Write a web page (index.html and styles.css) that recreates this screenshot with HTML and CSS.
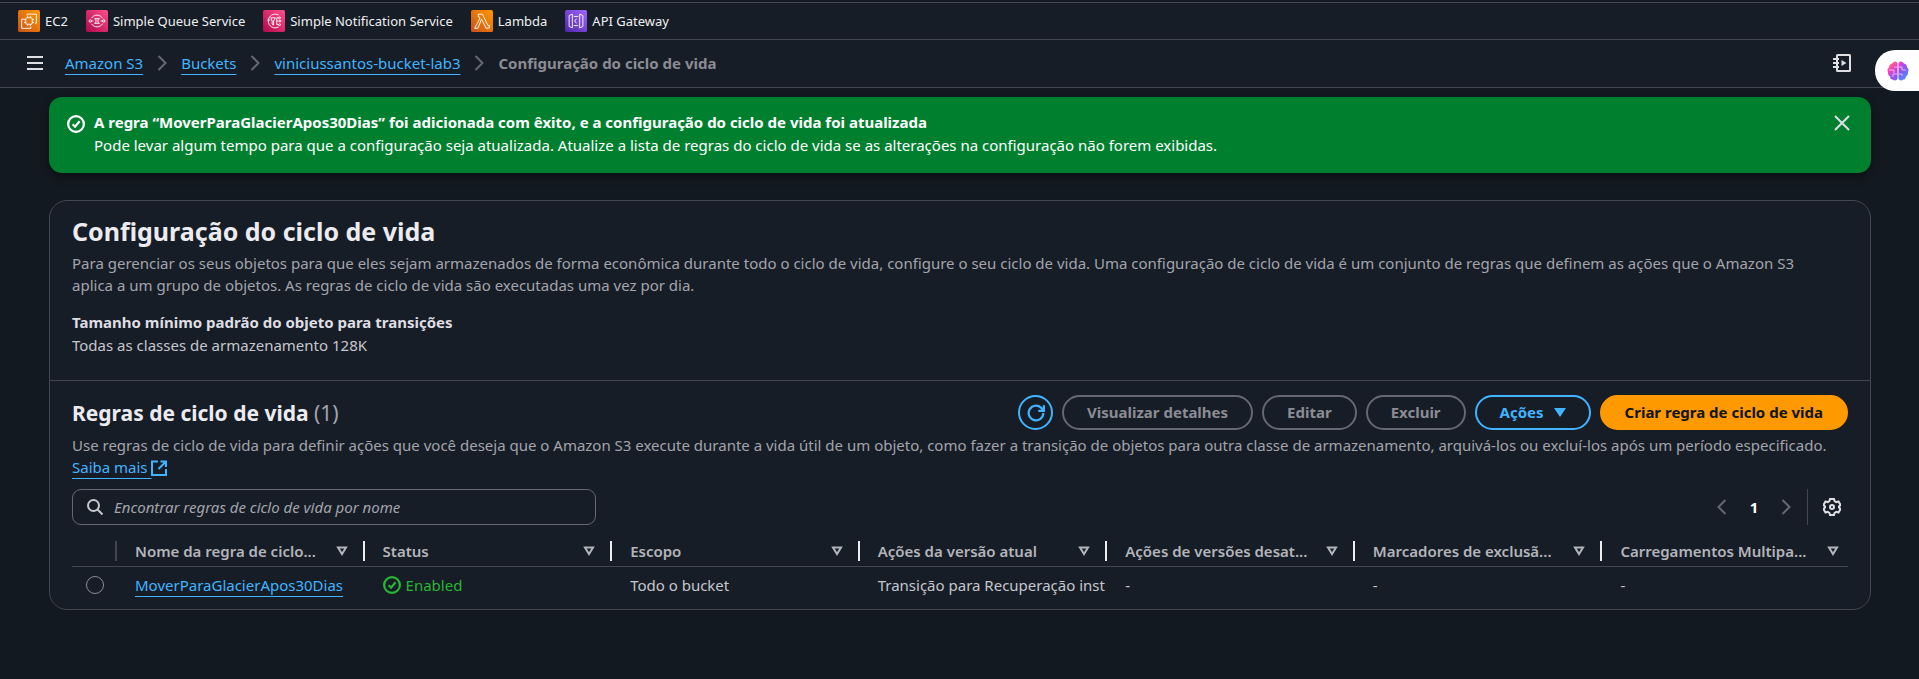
FILE: index.html
```html
<!DOCTYPE html>
<html lang="pt-BR">
<head>
<meta charset="utf-8">
<title>Configuração do ciclo de vida | S3</title>
<link rel="stylesheet" href="styles.css">
</head>
<body>
<svg class="defs" aria-hidden="true">
  <defs>
    <linearGradient id="g-orange" x1="0" y1="1" x2="1" y2="0"><stop offset="0" stop-color="#c8511b"/><stop offset="1" stop-color="#f90"/></linearGradient>
    <linearGradient id="g-pink" x1="0" y1="1" x2="1" y2="0"><stop offset="0" stop-color="#b0084d"/><stop offset="1" stop-color="#ff4f8b"/></linearGradient>
    <linearGradient id="g-purple" x1="0" y1="1" x2="1" y2="0"><stop offset="0" stop-color="#4d27a8"/><stop offset="1" stop-color="#a166ff"/></linearGradient>
    <linearGradient id="g-brain" x1="0" y1="0" x2="1" y2="1"><stop offset="0" stop-color="#ff9a3d"/><stop offset=".3" stop-color="#f23fc0"/><stop offset=".6" stop-color="#8a55f5"/><stop offset="1" stop-color="#35a8ff"/></linearGradient>
    <symbol id="ok" viewBox="0 0 16 16"><circle cx="8" cy="8" r="7"/><path d="m5 8.2 2.2 2.2 4-4.8"/></symbol>
    <symbol id="right" viewBox="0 0 16 16"><path d="m4.500 1 7 7-7 7"/></symbol>
    <symbol id="sort" viewBox="0 0 16 16"><path d="M4 4.500h8l-4 6.500z"/></symbol>
  </defs>
</svg>

<nav class="favorites" aria-label="Favoritos">
  <a class="fav" href="#ec2"><svg class="fav-icon" viewBox="0 0 24 24"><rect width="24" height="24" rx="2" fill="url(#g-orange)"/><g class="line"><path d="M10 6V4.500H20V14.500H18.500M7 10H4V20H14V18"/><rect x="8.500" y="8.500" width="7" height="7" rx="1"/><path d="M10.500 8.500v-2M13.500 8.500v-2M10.500 17.500v-2M13.500 17.500v-2M8.500 10.500h-2M8.500 13.500h-2M17.500 10.500h-2M17.500 13.500h-2"/></g></svg>EC2</a>
  <a class="fav" href="#sqs"><svg class="fav-icon" viewBox="0 0 24 24"><rect width="24" height="24" rx="2" fill="url(#g-pink)"/><g class="line"><path d="M6 9A7 7 0 0 1 18 9M6 15A7 7 0 0 0 18 15M9 9.500h6M9 14.500h6M10.500 9.500Q11.500 12 10.500 14.500M13.500 9.500Q12.500 12 13.500 14.500M6 12h2M16 12h2"/><circle cx="4.700" cy="12" r="1.300"/><circle cx="19.300" cy="12" r="1.300"/></g></svg>Simple Queue Service</a>
  <a class="fav" href="#sns"><svg class="fav-icon" viewBox="0 0 24 24"><rect width="24" height="24" rx="2" fill="url(#g-pink)"/><g class="line"><path d="M17 5.500A7.500 7.500 0 1 0 17 18.500M5 11h3M8.500 8.500h5l-2 3.500v4.500l-1.500-1V12zM15 12h2M15 12V8.500h2M15 12v4h2"/><circle cx="18" cy="8.500" r="1"/><circle cx="18.500" cy="12" r="1"/><circle cx="18" cy="16" r="1"/></g></svg>Simple Notification Service</a>
  <a class="fav" href="#lambda"><svg class="fav-icon" viewBox="0 0 24 24"><rect width="24" height="24" rx="2" fill="url(#g-orange)"/><path class="line" d="M8 4.500h4.500L18.500 17l1.500-.5v3l-3.500.5-5-10L7.500 20H4L9.800 9 9 7.500H8z"/></svg>Lambda</a>
  <a class="fav" href="#apigateway"><svg class="fav-icon" viewBox="0 0 24 24"><rect width="24" height="24" rx="2" fill="url(#g-purple)"/><g class="line"><path d="M8 4.500 4.500 6v12L8 19.500zM16 4.500 19.500 6v12L16 19.500zM9.500 7h5M9.500 17h5M12.500 9.500 10.500 12l2 2.500"/></g></svg>API Gateway</a>
</nav>

<header class="topbar">
  <button class="icon-btn menu" aria-label="Abrir navegação"><svg class="i16" viewBox="0 0 16 16"><path d="M0 2h16M0 8h16M0 14h16"/></svg></button>
  <nav class="crumbs" aria-label="Trilha">
    <a href="#s3">Amazon S3</a><svg class="chev"><use href="#right"/></svg>
    <a href="#buckets">Buckets</a><svg class="chev"><use href="#right"/></svg>
    <a href="#bucket">viniciussantos-bucket-lab3</a><svg class="chev"><use href="#right"/></svg>
    <span class="current">Configuração do ciclo de vida</span>
  </nav>
  <button class="icon-btn" aria-label="Tutoriais"><svg class="i18" viewBox="0 0 18 18"><path d="M4 3V1.500Q4 1 4.500 1h12q.5 0 .5.500v15q0 .5-.5.500h-12q-.5 0-.5-.500V15M0 5h6M0 9h6M0 13h6M4 3v12"/><path class="solid" d="M8.500 6v6l5-3z"/></svg></button>
  <button class="assistant" aria-label="Assistente"><svg class="brain" viewBox="0 0 22 20"><path fill="url(#g-brain)" d="M10.500 2v16q-2 2.500-5 .5-2.500-.5-2.500-3Q.5 14 1 11-.5 8 2 6.500 2 3 5 2.500 8-1 10.500 2zM11.500 2v16q2 2.500 5 .5 2.500-.5 2.500-3 2.500-1.500 2-4.500Q22.500 8 20 6.500 20 3 17 2.500 14-1 11.500 2z"/><path class="fold" d="M10 6H7M2 9h5v3M10 13H6v3M12 6h3v3h4M12 13h3v2"/></svg></button>
</header>

<main>
  <section class="flash" role="status">
    <svg class="ok"><use href="#ok"/></svg>
    <div class="flash-text"><strong>A regra “MoverParaGlacierApos30Dias” foi adicionada com êxito, e a configuração do ciclo de vida foi atualizada</strong><p>Pode levar algum tempo para que a configuração seja atualizada. Atualize a lista de regras do ciclo de vida se as alterações na configuração não forem exibidas.</p></div>
    <button class="icon-btn" aria-label="Fechar"><svg class="i16" viewBox="0 0 16 16"><path d="m1 1 14 14M15 1 1 15"/></svg></button>
  </section>

  <div class="panel">
    <section class="config">
      <h1>Configuração do ciclo de vida</h1>
      <p class="muted">Para gerenciar os seus objetos para que eles sejam armazenados de forma econômica durante todo o ciclo de vida, configure o seu ciclo de vida. Uma configuração de ciclo de vida é um conjunto de regras que definem as ações que o Amazon S3 aplica a um grupo de objetos. As regras de ciclo de vida são executadas uma vez por dia.</p>
      <dl><dt>Tamanho mínimo padrão do objeto para transições</dt><dd>Todas as classes de armazenamento 128K</dd></dl>
    </section>

    <section class="rules">
      <div class="rules-head">
        <h2>Regras de ciclo de vida <span>(1)</span></h2>
        <div class="actions">
          <button class="btn round" aria-label="Atualizar"><svg class="i18" viewBox="0 0 16 16"><path d="M14.500 8A6.500 6.500 0 1 1 12.500 3.300L14.500 5.500M15 1v5h-5"/></svg></button>
          <button class="btn" disabled>Visualizar detalhes</button>
          <button class="btn" disabled>Editar</button>
          <button class="btn" disabled>Excluir</button>
          <button class="btn" aria-haspopup="menu">Ações <svg class="caret" viewBox="0 0 12 10"><path d="M0 1h12L6 10z"/></svg></button>
          <button class="btn primary">Criar regra de ciclo de vida</button>
        </div>
      </div>
      <p class="muted">Use regras de ciclo de vida para definir ações que você deseja que o Amazon S3 execute durante a vida útil de um objeto, como fazer a transição de objetos para outra classe de armazenamento, arquivá-los ou excluí-los após um período especificado. <a href="#saiba">Saiba mais <svg class="ext" viewBox="0 0 16 16"><path d="M7 1.500H1v13.500h14V9M9.500 1.500H15V7M15 1.500 7.500 9"/></svg></a></p>
      <div class="tools">
        <label class="search"><svg class="i16" viewBox="0 0 16 16"><circle cx="6.500" cy="6.500" r="5.500"/><path d="m10.500 10.500 5 5"/></svg><input type="search" aria-label="Encontrar regras" placeholder="Encontrar regras de ciclo de vida por nome"></label>
        <div class="pager">
          <button class="icon-btn dim" aria-label="Anterior"><svg class="i16" viewBox="0 0 16 16"><path d="m11.500 1-7 7 7 7"/></svg></button>
          <button class="page" aria-current="page">1</button>
          <button class="icon-btn dim" aria-label="Próxima"><svg class="i16"><use href="#right"/></svg></button>
          <div class="prefs"><button class="icon-btn" aria-label="Preferências"><svg class="i18" viewBox="0 0 18 18"><path d="M7 1h4l.6 2.200 1.700 1 2.200-.7 2 3.500L16 8.500v1l1.500 1.500-2 3.500-2.200-.7-1.700 1L11 17H7l-.6-2.200-1.700-1-2.200.7-2-3.500L2 9.500v-1L.5 7l2-3.500 2.200.7 1.700-1z"/><circle cx="9" cy="9" r="2"/></svg></button></div>
        </div>
      </div>
      <table>
        <colgroup><col class="c-radio"><col span="6"></colgroup>
        <thead><tr>
          <th aria-label="Seleção"></th>
          <th><div><span>Nome da regra de ciclo...</span><svg class="sort"><use href="#sort"/></svg></div></th>
          <th><div><span>Status</span><svg class="sort"><use href="#sort"/></svg></div></th>
          <th><div><span>Escopo</span><svg class="sort"><use href="#sort"/></svg></div></th>
          <th><div><span>Ações da versão atual</span><svg class="sort"><use href="#sort"/></svg></div></th>
          <th><div><span>Ações de versões desat...</span><svg class="sort"><use href="#sort"/></svg></div></th>
          <th><div><span>Marcadores de exclusã...</span><svg class="sort"><use href="#sort"/></svg></div></th>
          <th><div><span>Carregamentos Multipa...</span><svg class="sort"><use href="#sort"/></svg></div></th>
        </tr></thead>
        <tbody><tr>
          <td class="pick"><input type="radio" name="rule" aria-label="MoverParaGlacierApos30Dias"></td>
          <td><a href="#rule">MoverParaGlacierApos30Dias</a></td>
          <td><span class="enabled"><svg class="ok"><use href="#ok"/></svg>Enabled</span></td>
          <td>Todo o bucket</td>
          <td>Transição para Recuperação inst</td>
          <td>-</td><td>-</td><td>-</td>
        </tr></tbody>
      </table>
    </section>
  </div>
</main>
</body>
</html>
```

FILE: styles.css
```css
* { box-sizing: border-box; }
body {
  margin: 0;
  background: #131920;
  color: #c6c6cd;
  font: 15px/22px "Noto Sans", sans-serif;
}
.defs { position: absolute; width: 0; height: 0; }
h1, h2, p, dl, dd { margin: 0; }
a { color: #42b4ff; text-decoration: underline; text-underline-offset: 5px; }
button { font: inherit; color: inherit; cursor: pointer; }
svg { flex: none; fill: none; stroke: currentColor; stroke-width: 2; }
.i16 { width: 16px; height: 16px; }
.i18 { width: 18px; height: 18px; }
.icon-btn { display: flex; padding: 0; border: 0; background: none; color: #dedee3; }
.solid { fill: currentColor; stroke: none; }

.favorites {
  display: flex;
  align-items: center;
  gap: 18px;
  height: 38px;
  padding: 0 18px;
  background: #161d26;
  border-top: 1px solid #424650;
  border-bottom: 1px solid #424650;
}
body { padding-top: 2px; }
.fav { display: flex; align-items: center; gap: 5px; color: #f0f0f3; font-size: 13px; text-decoration: none; }
.fav-icon { width: 22px; height: 22px; stroke: none; }
.line { fill: none; stroke: #fff; stroke-width: 1; }

.topbar {
  display: flex;
  align-items: center;
  height: 48px;
  padding: 0 68px 1px 27px;
  background: #161d26;
  border-bottom: 1px solid #424650;
}
.menu { margin-right: 22px; }
.crumbs { display: flex; align-items: center; flex: 1; gap: 11px; }
.chev { width: 16px; height: 16px; color: #656871; }
.current { color: #8c8c94; font-weight: 700; }
.assistant {
  position: absolute;
  right: 0;
  top: 50px;
  width: 44px;
  height: 41px;
  padding: 0 0 0 12px;
  border: 0;
  border-radius: 20px 0 0 20px;
  background: #fff;
  display: flex;
  align-items: center;
}
.brain { width: 22px; height: 20px; stroke: none; }
.fold { stroke: #fff; stroke-width: 1; opacity: .6; }

main { padding: 9px 48px 0 49px; }
.flash {
  display: flex;
  align-items: flex-start;
  gap: 9px;
  padding: 14px 21px 17px 18px;
  border-radius: 13px;
  background: #00802f;
  color: #fff;
  box-shadow: 0 4px 8px #0006;
}
.flash-text { display: flex; flex: 1; flex-direction: column; gap: 1px; }
.ok { width: 18px; height: 18px; }
.flash .ok, .flash .icon-btn { margin-top: 4px; }

.panel { margin-top: 27px; border: 1px solid #424650; border-radius: 18px; background: #161d26; }
.config { padding: 16px 22px 24px; border-bottom: 1px solid #424650; }
h1 { color: #ebebf0; font-size: 25px; line-height: 28px; }
h2 { color: #ebebf0; font-size: 21px; line-height: 26px; }
h2 span { color: #a4a4ad; font-weight: 400; }
.muted { color: #a4a4ad; }
.config .muted { margin-top: 7px; padding-right: 22px; }
dl { display: grid; gap: 1px; margin-top: 15px; }
dt { color: #dedee3; font-weight: 700; }

.rules { padding: 14px 22px 6px; }
.rules-head { display: flex; justify-content: space-between; align-items: center; }
.rules .muted { margin-top: 4px; }
.actions { display: flex; gap: 9px; }
.btn {
  display: flex;
  align-items: center;
  gap: 10px;
  height: 35px;
  padding: 0 23px 2px;
  border: 2px solid #42b4ff;
  border-radius: 18px;
  background: none;
  color: #42b4ff;
  font-weight: 700;
}
.btn:disabled { border-color: #656871; color: #8c8c94; }
.round { width: 35px; justify-content: center; padding: 0; }
.primary { border-color: #f90; background: #f90; color: #0f141a; }
.caret { width: 12px; height: 10px; fill: currentColor; stroke: none; }
.ext { width: 16px; height: 16px; vertical-align: -3px; }

.tools { display: flex; justify-content: space-between; align-items: center; margin-top: 11px; }
.search {
  display: flex;
  align-items: center;
  gap: 11px;
  width: 524px;
  height: 36px;
  padding: 0 14px;
  border: 1px solid #656871;
  border-radius: 9px;
}
.search input { flex: 1; border: 0; padding: 0; outline: 0; background: none; color: inherit; font: inherit; }
.search input::placeholder { color: #a4a4ad; font-style: italic; opacity: 1; }
.pager { display: flex; align-items: center; gap: 13px; padding-right: 7px; }
.dim { color: #656871; }
.page { width: 22px; padding: 0; border: 0; background: none; color: #fff; font-weight: 700; }
.prefs { display: flex; align-items: center; height: 36px; padding-left: 15px; border-left: 1px solid #424650; }

table { width: 100%; margin-top: 13px; border-spacing: 0; table-layout: fixed; }
.c-radio { width: 43px; }
th { padding: 3px 0 5px; border-bottom: 1px solid #424650; color: #b4b4bb; font-weight: 600; text-align: left; }
th div { display: flex; align-items: center; height: 20px; padding: 0 13px 0 18px; border-left: 2px solid #ebebf0; }
th:nth-child(2) div { border-color: #424650; }
th:last-child div { padding-right: 7px; }
th span { flex: 1; white-space: nowrap; }
.sort { width: 16px; height: 16px; }
td { padding: 7px 0 7px 20px; white-space: nowrap; }
.pick { padding-left: 14px; }
input[type="radio"] { display: block; width: 18px; height: 18px; margin: 0; appearance: none; border: 1px solid #8c8c94; border-radius: 50%; }
.enabled { display: flex; align-items: center; gap: 5px; color: #2bb534; }
```
